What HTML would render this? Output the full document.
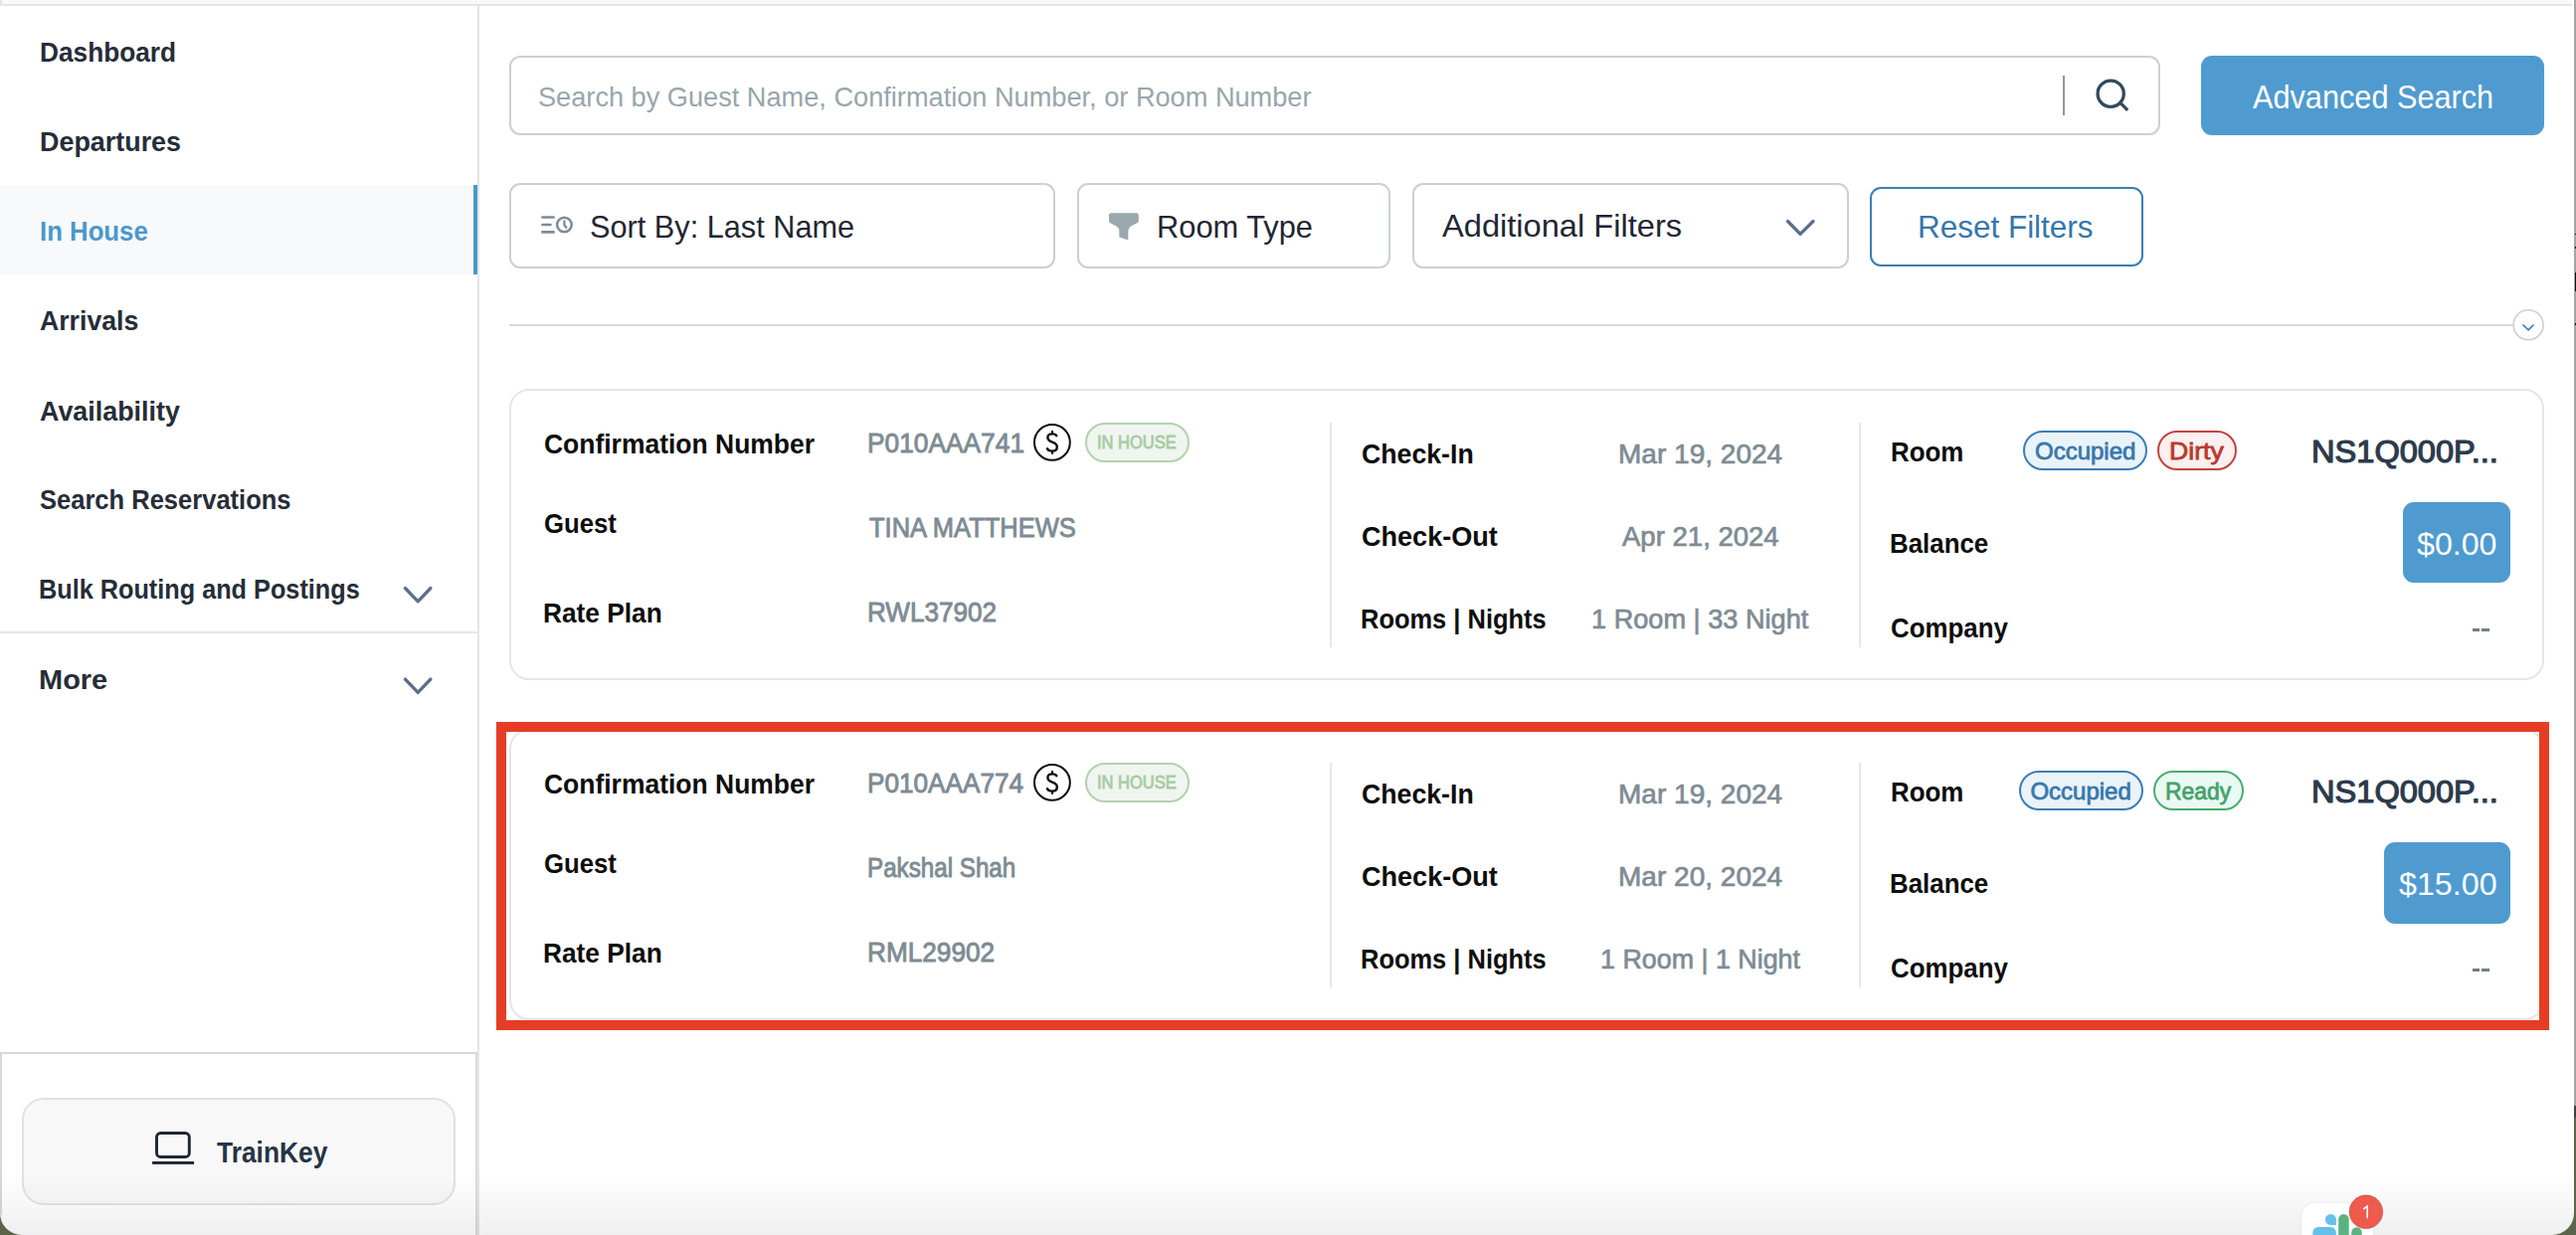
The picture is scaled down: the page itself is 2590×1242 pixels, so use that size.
<!DOCTYPE html>
<html><head><meta charset="utf-8"><title>In House</title>
<style>
html,body{margin:0;padding:0;}
body{width:2590px;height:1242px;overflow:hidden;position:relative;background:#fff;font-family:"Liberation Sans", sans-serif;}
.t{position:absolute;white-space:pre;line-height:1;}
.a{position:absolute;box-sizing:border-box;}
</style></head><body>
<!-- window chrome -->
<div class="a" style="left:0;top:0;width:2590px;height:1242px;background:#5c6449;"></div>
<div class="a" style="left:0;top:0;width:2588px;height:1242px;background:#fff;border-radius:0 0 22px 22px;"></div>
<div class="a" style="left:2588px;top:0;width:2px;height:1112px;background:#a3a3a3;"></div>
<div class="a" style="left:2588px;top:1112px;width:2px;height:12px;background:#3c4150;"></div>
<div class="a" style="left:2589px;top:235px;width:1px;height:1px;background:#111;"></div>
<div class="a" style="left:2589px;top:248px;width:1px;height:2px;background:#111;"></div>
<div class="a" style="left:2589px;top:274px;width:1px;height:19px;background:#111;"></div>
<div class="a" style="left:2589px;top:325px;width:1px;height:2px;background:#111;"></div>
<div class="a" style="left:0;top:0;width:2586px;height:4px;background:#f8f9f9;"></div>
<div class="a" style="left:0;top:4px;width:2586px;height:2px;background:#e3e6e8;"></div>
<div class="a" style="left:0;top:0;width:2px;height:5px;background:#e3e6e8;"></div>
<div class="a" style="left:0;top:1059px;width:2px;height:163px;background:#d5d9dc;"></div>
<div class="a" style="left:478px;top:1059px;width:2px;height:183px;background:#dadcde;"></div>
<!-- sidebar -->
<div class="a" style="left:0;top:186px;width:476px;height:90px;background:#f8f9fa;"></div>
<div class="a" style="left:476px;top:186px;width:4px;height:90px;background:#4a98cc;"></div>
<div class="a" style="left:480px;top:6px;width:2px;height:1236px;background:#e4e5e6;"></div>
<div class="a" style="left:0;top:635px;width:480px;height:2px;background:#e3e6e8;"></div>
<div class="a" style="left:0;top:1058px;width:480px;height:2px;background:#d5d9dc;"></div>
<svg class="a" style="left:0;top:0" width="480" height="720">
  <polyline points="407.4,591.5 420.2,604.8 432.9,591.5" fill="none" stroke="#5d6e8c" stroke-width="3.3" stroke-linecap="round" stroke-linejoin="round"/>
  <polyline points="407.4,683.1 420.2,696.4 432.9,683.1" fill="none" stroke="#5d6e8c" stroke-width="3.3" stroke-linecap="round" stroke-linejoin="round"/>
</svg>
<div class="a" style="left:22px;top:1104px;width:436px;height:108px;background:#f8f8f8;border:2px solid #dfe2e4;border-radius:22px;"></div>
<svg class="a" style="left:140px;top:1125px" width="70" height="60">
  <rect x="17.5" y="14.5" width="32.8" height="24" rx="4" fill="none" stroke="#1f2633" stroke-width="2.9"/>
  <rect x="13.1" y="43" width="42" height="2.9" fill="#1f2633"/>
</svg>
<!-- search row -->
<div class="a" style="left:512px;top:56px;width:1660px;height:80px;border:2px solid #c9d1d5;border-radius:11px;"></div>
<div class="a" style="left:2074px;top:76px;width:2px;height:40px;background:#8e9ba3;"></div>
<svg class="a" style="left:2100px;top:72px" width="50" height="50">
  <circle cx="22.2" cy="22.2" r="13.1" fill="none" stroke="#34495b" stroke-width="3.3"/>
  <line x1="31.6" y1="31.2" x2="39.2" y2="38.8" stroke="#34495b" stroke-width="3.3"/>
</svg>
<div class="a" style="left:2213px;top:56px;width:345px;height:80px;background:#4f9bcf;border-radius:11px;"></div>
<!-- filter row -->
<div class="a" style="left:512px;top:184px;width:549px;height:86px;border:2px solid #c9d1d5;border-radius:11px;"></div>
<svg class="a" style="left:535px;top:205px" width="60" height="45">
  <line x1="10.4" y1="13.5" x2="21.6" y2="13.5" stroke="#7e8c95" stroke-width="2.7" stroke-linecap="round"/>
  <line x1="10.4" y1="21" x2="18.4" y2="21" stroke="#7e8c95" stroke-width="2.7" stroke-linecap="round"/>
  <line x1="10.4" y1="28.4" x2="21.6" y2="28.4" stroke="#7e8c95" stroke-width="2.7" stroke-linecap="round"/>
  <circle cx="32.4" cy="21" r="7.3" fill="none" stroke="#7e8c95" stroke-width="2.5"/>
  <polyline points="32.4,17.5 32.4,21.3 34.3,23.8" fill="none" stroke="#7e8c95" stroke-width="2.3" stroke-linecap="round" stroke-linejoin="round"/>
</svg>
<div class="a" style="left:1083px;top:184px;width:315px;height:86px;border:2px solid #c9d1d5;border-radius:11px;"></div>
<svg class="a" style="left:1115px;top:214px" width="32" height="30">
  <path d="M0,2.3 Q0,0.2 2.2,0.2 H27.6 Q29.8,0.2 29.8,2.3 V8.2 Q29.6,9.5 27.8,10.6 L22.4,13.3 Q19.6,15 19.3,18 V27 L17.5,26.9 L10.3,24.2 V17.5 Q10,15 7.4,13.6 L1.8,10.6 Q0,9.6 0,8.2 Z" fill="#9ba7ae"/>
</svg>
<div class="a" style="left:1420px;top:184px;width:439px;height:86px;border:2px solid #c9d1d5;border-radius:11px;"></div>
<svg class="a" style="left:1780px;top:205px" width="60" height="45">
  <polyline points="17.5,17.5 30.05,30.4 43,17.5" fill="none" stroke="#5d6e8c" stroke-width="3.3" stroke-linecap="round" stroke-linejoin="round"/>
</svg>
<div class="a" style="left:1880px;top:188px;width:275px;height:80px;border:2px solid #3b7fb3;border-radius:11px;"></div>
<div class="a" style="left:512px;top:326px;width:2015px;height:2px;background:#d3d9dc;"></div>
<svg class="a" style="left:2515px;top:300px" width="55" height="55">
  <circle cx="27.1" cy="26.8" r="15" fill="#fff" stroke="#c8d1d7" stroke-width="1.6"/>
  <polyline points="21.4,26.5 27.1,31.8 32.5,26.5" fill="none" stroke="#3a7db3" stroke-width="1.7"/>
</svg>
<div class="a" style="left:512px;top:391px;width:2046px;height:293px;border:2px solid #e3e7e8;border-radius:20px;background:#fff;"></div>
<div class="a" style="left:1337px;top:425px;width:2px;height:226px;background:#e3e7e8;"></div>
<div class="a" style="left:1869px;top:425px;width:2px;height:226px;background:#e3e7e8;"></div>
<svg class="a" style="left:1030px;top:415px" width="60" height="60">
  <circle cx="27.9" cy="29.9" r="17.9" fill="none" stroke="#0d0d0d" stroke-width="2"/>
  <path d="M32.3,23.2 Q31.6,21.4 28,21.4 Q23.4,21.4 23.4,25 Q23.4,28 28,29.6 Q32.8,31.2 32.8,34.4 Q32.8,38.6 28,38.6 Q23.8,38.6 23,36.2" fill="none" stroke="#0d0d0d" stroke-width="2.4" stroke-linecap="round"/>
  <line x1="28" y1="18" x2="28" y2="21.4" stroke="#0d0d0d" stroke-width="2"/>
  <line x1="28" y1="38.6" x2="28" y2="41.8" stroke="#0d0d0d" stroke-width="2"/>
</svg>
<div class="a" style="left:1091px;top:425px;width:105px;height:40px;background:#eff5ef;border:2px solid #b2d2ac;border-radius:20px;"></div>
<div class="a" style="left:2034px;top:433px;width:125px;height:39.5px;background:#eaf3f8;border:2px solid #3b7db5;border-radius:20px;"></div>
<div class="a" style="left:2169px;top:433px;width:80px;height:39.5px;background:#fbefef;border:2px solid #c0453d;border-radius:20px;"></div>
<div class="a" style="left:2416px;top:505px;width:108px;height:81px;background:#4f9bcf;border-radius:11px;"></div>
<div class="a" style="left:2485.5px;top:632px;width:7.3px;height:2.8px;background:#6f7f89;"></div>
<div class="a" style="left:2495.3px;top:632px;width:7.3px;height:2.8px;background:#6f7f89;"></div>
<div class="a" style="left:512px;top:733px;width:2046px;height:293px;border:2px solid #e3e7e8;border-radius:20px;background:#fff;"></div>
<div class="a" style="left:1337px;top:767px;width:2px;height:226px;background:#e3e7e8;"></div>
<div class="a" style="left:1869px;top:767px;width:2px;height:226px;background:#e3e7e8;"></div>
<svg class="a" style="left:1030px;top:757px" width="60" height="60">
  <circle cx="27.9" cy="29.9" r="17.9" fill="none" stroke="#0d0d0d" stroke-width="2"/>
  <path d="M32.3,23.2 Q31.6,21.4 28,21.4 Q23.4,21.4 23.4,25 Q23.4,28 28,29.6 Q32.8,31.2 32.8,34.4 Q32.8,38.6 28,38.6 Q23.8,38.6 23,36.2" fill="none" stroke="#0d0d0d" stroke-width="2.4" stroke-linecap="round"/>
  <line x1="28" y1="18" x2="28" y2="21.4" stroke="#0d0d0d" stroke-width="2"/>
  <line x1="28" y1="38.6" x2="28" y2="41.8" stroke="#0d0d0d" stroke-width="2"/>
</svg>
<div class="a" style="left:1091px;top:767px;width:105px;height:40px;background:#eff5ef;border:2px solid #b2d2ac;border-radius:20px;"></div>
<div class="a" style="left:2030px;top:775px;width:125px;height:39.5px;background:#eaf3f8;border:2px solid #3b7db5;border-radius:20px;"></div>
<div class="a" style="left:2165px;top:775px;width:91px;height:39.5px;background:#eaf9f2;border:2px solid #4bac72;border-radius:20px;"></div>
<div class="a" style="left:2397px;top:847px;width:127px;height:82px;background:#4f9bcf;border-radius:11px;"></div>
<div class="a" style="left:2485.5px;top:974px;width:7.3px;height:2.8px;background:#6f7f89;"></div>
<div class="a" style="left:2495.3px;top:974px;width:7.3px;height:2.8px;background:#6f7f89;"></div>
<div class="a" style="left:499px;top:726px;width:2064px;height:310px;border:10px solid #e53d25;"></div>
<div class="t" id="nav1" style="left:39.93px;top:39.01px;font-size:28.00px;letter-spacing:0.000px;font-weight:700;color:#262d38;transform:scaleX(0.9373);transform-origin:0 0;">Dashboard</div>
<div class="t" id="nav2" style="left:39.88px;top:129.10px;font-size:28.00px;letter-spacing:0.000px;font-weight:700;color:#262d38;transform:scaleX(0.9607);transform-origin:0 0;">Departures</div>
<div class="t" id="nav3" style="left:40.12px;top:219.21px;font-size:28.00px;letter-spacing:0.000px;font-weight:700;color:#4a98cc;transform:scaleX(0.9198);transform-origin:0 0;">In House</div>
<div class="t" id="nav4" style="left:39.66px;top:309.40px;font-size:28.00px;letter-spacing:0.000px;font-weight:700;color:#262d38;transform:scaleX(0.9520);transform-origin:0 0;">Arrivals</div>
<div class="t" id="nav5" style="left:39.65px;top:399.51px;font-size:28.00px;letter-spacing:0.000px;font-weight:700;color:#262d38;transform:scaleX(0.9600);transform-origin:0 0;">Availability</div>
<div class="t" id="nav6" style="left:39.71px;top:489.40px;font-size:28.00px;letter-spacing:0.000px;font-weight:700;color:#262d38;transform:scaleX(0.9116);transform-origin:0 0;">Search Reservations</div>
<div class="t" id="nav7" style="left:38.82px;top:578.81px;font-size:28.00px;letter-spacing:0.000px;font-weight:700;color:#262d38;transform:scaleX(0.9020);transform-origin:0 0;">Bulk Routing and Postings</div>
<div class="t" id="nav8" style="left:38.52px;top:670.40px;font-size:28.00px;letter-spacing:0.000px;font-weight:700;color:#262d38;transform:scaleX(1.0344);transform-origin:0 0;">More</div>
<div class="t" id="trainkey" style="left:218.00px;top:1145.40px;font-size:29.00px;letter-spacing:0.000px;font-weight:700;color:#263445;transform:scaleX(0.9098);transform-origin:0 0;">TrainKey</div>
<div class="t" id="ph" style="left:541.42px;top:83.91px;font-size:27.50px;letter-spacing:0.000px;font-weight:400;color:#98a6ad;transform:scaleX(0.9878);transform-origin:0 0;">Search by Guest Name, Confirmation Number, or Room Number</div>
<div class="t" id="adv" style="left:2265.00px;top:80.01px;font-size:34.00px;letter-spacing:0.000px;font-weight:400;color:#ffffff;transform:scaleX(0.9023);transform-origin:0 0;">Advanced Search</div>
<div class="t" id="sort" style="left:593.26px;top:211.71px;font-size:32.00px;letter-spacing:0.000px;font-weight:400;color:#1f2633;transform:scaleX(0.9593);transform-origin:0 0;">Sort By: Last Name</div>
<div class="t" id="rtype" style="left:1163.09px;top:211.71px;font-size:32.00px;letter-spacing:0.000px;font-weight:400;color:#1f2633;transform:scaleX(0.9629);transform-origin:0 0;">Room Type</div>
<div class="t" id="addf" style="left:1449.99px;top:210.91px;font-size:32.00px;letter-spacing:0.000px;font-weight:400;color:#1f2633;transform:scaleX(1.0191);transform-origin:0 0;">Additional Filters</div>
<div class="t" id="reset" style="left:1928.05px;top:211.71px;font-size:32.00px;letter-spacing:0.000px;font-weight:400;color:#3576ab;transform:scaleX(0.9830);transform-origin:0 0;">Reset Filters</div>
<div class="t" id="c0_l1" style="left:546.64px;top:432.90px;font-size:28.00px;letter-spacing:0.000px;font-weight:700;color:#0e0e0e;transform:scaleX(0.9453);transform-origin:0 0;">Confirmation Number</div>
<div class="t" id="c0_l2" style="left:546.66px;top:512.81px;font-size:28.00px;letter-spacing:0.000px;font-weight:700;color:#0e0e0e;transform:scaleX(0.9192);transform-origin:0 0;">Guest</div>
<div class="t" id="c0_l3" style="left:545.70px;top:603.21px;font-size:28.00px;letter-spacing:0.000px;font-weight:700;color:#0e0e0e;transform:scaleX(0.9387);transform-origin:0 0;">Rate Plan</div>
<div class="t" id="c0_v1" style="left:871.71px;top:432.01px;font-size:28.08px;letter-spacing:0.000px;font-weight:400;color:#7e8b94;-webkit-text-stroke:0.9px #7e8b94;transform:scaleX(0.9373);transform-origin:0 0;">P010AAA741</div>
<div class="t" id="c0_ih" style="left:1103.28px;top:436.01px;font-size:18.20px;letter-spacing:0.000px;font-weight:400;color:#a9cba3;-webkit-text-stroke:0.8px #a9cba3;transform:scaleX(0.9080);transform-origin:0 0;">IN HOUSE</div>
<div class="t" id="c0_v2" style="left:873.57px;top:516.81px;font-size:28.08px;letter-spacing:0.000px;font-weight:400;color:#7e8b94;-webkit-text-stroke:0.9px #7e8b94;transform:scaleX(0.9083);transform-origin:0 0;">TINA MATTHEWS</div>
<div class="t" id="c0_v3" style="left:871.72px;top:601.51px;font-size:28.08px;letter-spacing:0.000px;font-weight:400;color:#7e8b94;-webkit-text-stroke:0.9px #7e8b94;transform:scaleX(0.9290);transform-origin:0 0;">RWL37902</div>
<div class="t" id="c0_l4" style="left:1368.85px;top:443.21px;font-size:28.00px;letter-spacing:0.000px;font-weight:700;color:#0e0e0e;transform:scaleX(0.9534);transform-origin:0 0;">Check-In</div>
<div class="t" id="c0_l5" style="left:1368.84px;top:526.01px;font-size:28.00px;letter-spacing:0.000px;font-weight:700;color:#0e0e0e;transform:scaleX(0.9664);transform-origin:0 0;">Check-Out</div>
<div class="t" id="c0_l6" style="left:1367.99px;top:608.71px;font-size:28.00px;letter-spacing:0.000px;font-weight:700;color:#0e0e0e;transform:scaleX(0.9089);transform-origin:0 0;">Rooms | Nights</div>
<div class="t" id="c0_v4" style="left:1626.64px;top:441.81px;font-size:28.56px;letter-spacing:0.000px;font-weight:400;color:#7e8b94;-webkit-text-stroke:0.7px #7e8b94;transform:scaleX(0.9819);transform-origin:0 0;">Mar 19, 2024</div>
<div class="t" id="c0_v5" style="left:1631.18px;top:525.01px;font-size:28.56px;letter-spacing:0.000px;font-weight:400;color:#7e8b94;-webkit-text-stroke:0.7px #7e8b94;transform:scaleX(0.9646);transform-origin:0 0;">Apr 21, 2024</div>
<div class="t" id="c0_v6" style="left:1600.10px;top:607.51px;font-size:28.56px;letter-spacing:0.000px;font-weight:400;color:#7e8b94;-webkit-text-stroke:0.7px #7e8b94;transform:scaleX(0.9509);transform-origin:0 0;">1 Room | 33 Night</div>
<div class="t" id="c0_l7" style="left:1901.15px;top:440.90px;font-size:28.00px;letter-spacing:0.000px;font-weight:700;color:#0e0e0e;transform:scaleX(0.9250);transform-origin:0 0;">Room</div>
<div class="t" id="c0_l8" style="left:1900.15px;top:533.31px;font-size:28.00px;letter-spacing:0.000px;font-weight:700;color:#0e0e0e;transform:scaleX(0.9238);transform-origin:0 0;">Balance</div>
<div class="t" id="c0_l9" style="left:1901.08px;top:618.40px;font-size:28.00px;letter-spacing:0.000px;font-weight:700;color:#0e0e0e;transform:scaleX(0.9238);transform-origin:0 0;">Company</div>
<div class="t" id="c0_occ" style="left:2046.00px;top:441.81px;font-size:24.00px;letter-spacing:0.000px;font-weight:400;color:#3878ad;-webkit-text-stroke:0.8px #3878ad;">Occupied</div>
<div class="t" id="c0_st" style="left:2180.89px;top:441.81px;font-size:24.00px;letter-spacing:0.000px;font-weight:400;color:#b8392f;-webkit-text-stroke:0.8px #b8392f;transform:scaleX(1.1102);transform-origin:0 0;">Dirty</div>
<div class="t" id="c0_ns" style="left:2323.58px;top:437.61px;font-size:32.24px;letter-spacing:0.000px;font-weight:400;color:#2c3a4b;-webkit-text-stroke:1.2px #2c3a4b;transform:scaleX(1.0110);transform-origin:0 0;">NS1Q000P...</div>
<div class="t" id="c0_bal" style="left:2430.40px;top:530.71px;font-size:32.24px;letter-spacing:0.000px;font-weight:400;color:#ffffff;transform:scaleX(0.9975);transform-origin:0 0;">$0.00</div>
<div class="t" id="c1_l1" style="left:546.64px;top:774.90px;font-size:28.00px;letter-spacing:0.000px;font-weight:700;color:#0e0e0e;transform:scaleX(0.9453);transform-origin:0 0;">Confirmation Number</div>
<div class="t" id="c1_l2" style="left:546.66px;top:854.81px;font-size:28.00px;letter-spacing:0.000px;font-weight:700;color:#0e0e0e;transform:scaleX(0.9192);transform-origin:0 0;">Guest</div>
<div class="t" id="c1_l3" style="left:545.70px;top:945.21px;font-size:28.00px;letter-spacing:0.000px;font-weight:700;color:#0e0e0e;transform:scaleX(0.9387);transform-origin:0 0;">Rate Plan</div>
<div class="t" id="c1_v1" style="left:871.72px;top:774.01px;font-size:28.08px;letter-spacing:0.000px;font-weight:400;color:#7e8b94;-webkit-text-stroke:0.9px #7e8b94;transform:scaleX(0.9317);transform-origin:0 0;">P010AAA774</div>
<div class="t" id="c1_ih" style="left:1103.28px;top:778.01px;font-size:18.20px;letter-spacing:0.000px;font-weight:400;color:#a9cba3;-webkit-text-stroke:0.8px #a9cba3;transform:scaleX(0.9080);transform-origin:0 0;">IN HOUSE</div>
<div class="t" id="c1_v2" style="left:871.78px;top:859.80px;font-size:27.00px;letter-spacing:0.000px;font-weight:400;color:#7e8b94;-webkit-text-stroke:0.9px #7e8b94;transform:scaleX(0.8957);transform-origin:0 0;">Pakshal Shah</div>
<div class="t" id="c1_v3" style="left:871.71px;top:943.51px;font-size:28.08px;letter-spacing:0.000px;font-weight:400;color:#7e8b94;-webkit-text-stroke:0.9px #7e8b94;transform:scaleX(0.9326);transform-origin:0 0;">RML29902</div>
<div class="t" id="c1_l4" style="left:1368.85px;top:785.21px;font-size:28.00px;letter-spacing:0.000px;font-weight:700;color:#0e0e0e;transform:scaleX(0.9534);transform-origin:0 0;">Check-In</div>
<div class="t" id="c1_l5" style="left:1368.84px;top:868.01px;font-size:28.00px;letter-spacing:0.000px;font-weight:700;color:#0e0e0e;transform:scaleX(0.9664);transform-origin:0 0;">Check-Out</div>
<div class="t" id="c1_l6" style="left:1367.99px;top:950.71px;font-size:28.00px;letter-spacing:0.000px;font-weight:700;color:#0e0e0e;transform:scaleX(0.9089);transform-origin:0 0;">Rooms | Nights</div>
<div class="t" id="c1_v4" style="left:1626.64px;top:783.81px;font-size:28.56px;letter-spacing:0.000px;font-weight:400;color:#7e8b94;-webkit-text-stroke:0.7px #7e8b94;transform:scaleX(0.9819);transform-origin:0 0;">Mar 19, 2024</div>
<div class="t" id="c1_v5" style="left:1626.64px;top:867.01px;font-size:28.56px;letter-spacing:0.000px;font-weight:400;color:#7e8b94;-webkit-text-stroke:0.7px #7e8b94;transform:scaleX(0.9819);transform-origin:0 0;">Mar 20, 2024</div>
<div class="t" id="c1_v6" style="left:1609.48px;top:949.51px;font-size:28.56px;letter-spacing:0.000px;font-weight:400;color:#7e8b94;-webkit-text-stroke:0.7px #7e8b94;transform:scaleX(0.9404);transform-origin:0 0;">1 Room | 1 Night</div>
<div class="t" id="c1_l7" style="left:1901.15px;top:782.90px;font-size:28.00px;letter-spacing:0.000px;font-weight:700;color:#0e0e0e;transform:scaleX(0.9250);transform-origin:0 0;">Room</div>
<div class="t" id="c1_l8" style="left:1900.15px;top:875.31px;font-size:28.00px;letter-spacing:0.000px;font-weight:700;color:#0e0e0e;transform:scaleX(0.9238);transform-origin:0 0;">Balance</div>
<div class="t" id="c1_l9" style="left:1901.08px;top:960.40px;font-size:28.00px;letter-spacing:0.000px;font-weight:700;color:#0e0e0e;transform:scaleX(0.9238);transform-origin:0 0;">Company</div>
<div class="t" id="c1_occ" style="left:2041.40px;top:783.81px;font-size:24.00px;letter-spacing:0.000px;font-weight:400;color:#3878ad;-webkit-text-stroke:0.8px #3878ad;">Occupied</div>
<div class="t" id="c1_st" style="left:2176.87px;top:783.81px;font-size:24.00px;letter-spacing:0.000px;font-weight:400;color:#45a26c;-webkit-text-stroke:0.8px #45a26c;transform:scaleX(0.9559);transform-origin:0 0;">Ready</div>
<div class="t" id="c1_ns" style="left:2323.58px;top:779.61px;font-size:32.24px;letter-spacing:0.000px;font-weight:400;color:#2c3a4b;-webkit-text-stroke:1.2px #2c3a4b;transform:scaleX(1.0110);transform-origin:0 0;">NS1Q000P...</div>
<div class="t" id="c1_bal" style="left:2412.00px;top:872.71px;font-size:32.24px;letter-spacing:0.000px;font-weight:400;color:#ffffff;">$15.00</div>
<div class="a" style="left:0;top:1180px;width:2588px;height:62px;border-radius:0 0 22px 22px;background:linear-gradient(rgba(0,0,0,0),rgba(0,0,0,0.062));pointer-events:none;"></div>
<div class="a" style="left:2314px;top:1210px;width:72px;height:72px;background:#fff;border-radius:13px;box-shadow:0 0 2px rgba(0,0,0,0.12);"></div>
<svg class="a" style="left:2300px;top:1190px" width="100" height="52">
  <path d="M43.4,30.9 A5.5,5.5 0 1 0 43.4,41.9 H48.9 V36.4 A5.5,5.5 0 0 0 43.4,30.9 Z" fill="#66c1ea"/>
  <rect x="25.3" y="44" width="23.5" height="16" rx="5.5" fill="#66c1ea"/>
  <rect x="51.2" y="31" width="10.5" height="30" rx="5.25" fill="#5bb381"/>
  <rect x="64.2" y="44.2" width="10.5" height="20" rx="5.25" fill="#5bb381"/>
  <circle cx="78.9" cy="28.8" r="17" fill="#ee5a4b" stroke="rgba(60,60,60,0.25)" stroke-width="0.8"/>
  <path d="M76.2,26 L80.2,23 V35.2" fill="none" stroke="#fff" stroke-width="1.6"/>
</svg>

</body></html>
